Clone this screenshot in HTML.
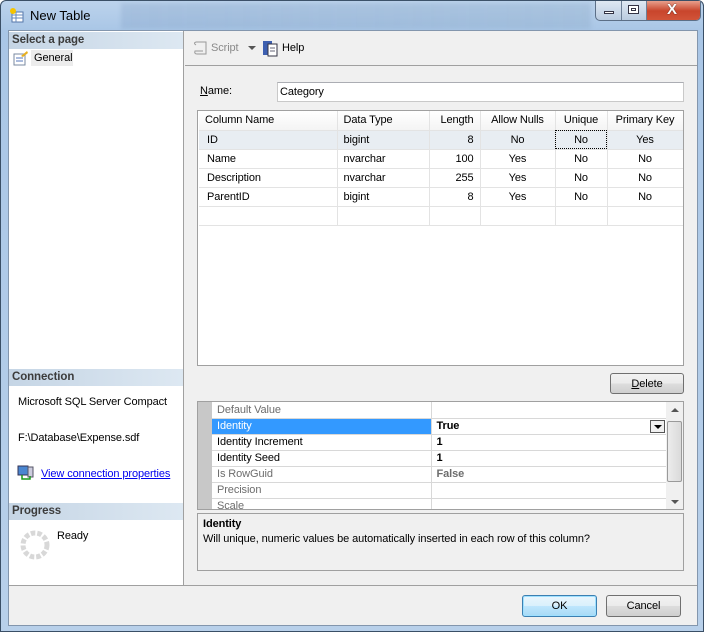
<!DOCTYPE html>
<html><head><meta charset="utf-8"><style>
*{box-sizing:border-box;margin:0;padding:0}
body{width:704px;height:632px;overflow:hidden;font-family:"Liberation Sans",sans-serif;font-size:11px;letter-spacing:-0.1px;color:#000;background:#fff}
.abs{position:absolute}
#win{position:absolute;left:0;top:0;width:704px;height:632px;background:linear-gradient(180deg,#bcd3ec 0,#a9c6e6 30px,#b8d0ea 100%);border:1px solid #3a4f66;border-radius:6px 6px 0 0}
#client{position:absolute;left:7px;top:29px;width:690px;height:596px;background:#f0f0f0;border:1px solid #8396ad}
.hdr{position:absolute;left:0;width:174px;height:17px;background:linear-gradient(90deg,#c5d5e5,#dde8f2);font-weight:bold;color:#3c3c3c;font-size:11.5px;padding:2px 3px}
.t{position:absolute;white-space:nowrap}
table{border-collapse:collapse;table-layout:fixed}
.grid td{height:19px;border-right:1px solid #e3e3e3;border-bottom:1px solid #e3e3e3;padding:0 6px;white-space:nowrap;overflow:hidden}
.btn{position:absolute;border:1px solid #707070;border-radius:3px;background:linear-gradient(#f2f2f2 0,#ebebeb 50%,#dddddd 51%,#cfcfcf 100%);text-align:center;line-height:20px}
.pg td{height:16px;border-bottom:1px solid #d8d8d8;padding:0 5px;white-space:nowrap}
</style></head><body>
<div id="win">
 <div class="abs" style="left:120px;top:2px;width:470px;height:26px;background:linear-gradient(90deg,rgba(120,150,190,.25),rgba(140,170,200,.35));filter:blur(2px)"></div>
 <svg class="abs" style="left:8px;top:6px" width="16" height="16"><rect x="3" y="5" width="11" height="10" fill="#fff" stroke="#5577aa"/><line x1="3" y1="8" x2="14" y2="8" stroke="#6688bb"/><line x1="3" y1="11" x2="14" y2="11" stroke="#6688bb"/><line x1="7" y1="5" x2="7" y2="15" stroke="#6688bb"/><circle cx="4" cy="4" r="3" fill="#f5c400"/></svg>
 <div class="t" style="left:29px;top:7px;font-size:13px;letter-spacing:0">New Table</div>
 <div class="abs" style="left:594px;top:0;width:106px;height:20px;border:1px solid #5c6f87;border-top:none;border-radius:0 0 5px 5px;overflow:hidden;background:linear-gradient(#dfe8f2,#b9cbe0)">
  <div class="abs" style="left:25px;top:0;width:1px;height:20px;background:#6d7f96"></div>
  <div class="abs" style="left:50px;top:0;width:1px;height:20px;background:#6d7f96"></div>
  <div class="abs" style="left:51px;top:0;width:55px;height:20px;background:linear-gradient(#e8a08c,#c8452c 50%,#d2553a)"></div>
  <div class="abs" style="left:8px;top:10px;width:10px;height:3px;background:#fff;border:1px solid #334"></div>
  <div class="abs" style="left:32px;top:4px;width:11px;height:9px;border:1px solid #334;background:#fff"><div style="margin:2px;height:3px;border:1px solid #334"></div></div>
  <div class="t" style="left:71px;top:0;color:#fff;font-weight:bold;font-size:15px;text-shadow:0 0 1px #000">X</div>
 </div>
 <div id="client">
  <div class="abs" style="left:0;top:0;width:175px;height:554px;background:#fff;border-right:1px solid #a0a0a0">
   <div class="hdr" style="top:1px">Select a page</div>
   <div class="abs" style="left:22px;top:19px;width:42px;height:16px;background:#ececec"></div>
   <svg class="abs" style="left:4px;top:19px" width="16" height="16"><rect x="1" y="4" width="11" height="11" fill="#fff" stroke="#7a8aa0"/><line x1="3" y1="8" x2="10" y2="8" stroke="#5577bb"/><line x1="3" y1="11" x2="10" y2="11" stroke="#5577bb"/><path d="M8 6 L14 1 L15 3 L10 7 Z" fill="#e8b020"/></svg>
   <div class="t" style="left:25px;top:21px">General</div>
   <div class="hdr" style="top:338px">Connection</div>
   <div class="t" style="left:9px;top:365px">Microsoft SQL Server Compact</div>
   <div class="t" style="left:9px;top:401px">F:\Database\Expense.sdf</div>
   <svg class="abs" style="left:8px;top:434px" width="18" height="16"><rect x="1" y="1" width="10" height="9" fill="#4a86d0" stroke="#335"/><rect x="11" y="2" width="5" height="10" fill="#ccd" stroke="#556"/><path d="M5 10 V14 H13 V11" stroke="#1a9a1a" stroke-width="1.5" fill="none"/></svg>
   <div class="t" style="left:32px;top:437px;color:#0000ee;text-decoration:underline">View connection properties</div>
   <div class="hdr" style="top:472px">Progress</div>
   <svg class="abs" style="left:10px;top:498px" width="32" height="32"><circle cx="16" cy="16" r="12" fill="none" stroke="#d8d8d8" stroke-width="5" stroke-dasharray="4.5 2"/></svg>
   <div class="t" style="left:48px;top:499px">Ready</div>
  </div>
  <div class="abs" style="left:176px;top:0;width:512px;height:35px;border-bottom:1px solid #a0a0a0"></div>
  <svg class="abs" style="left:184px;top:9px" width="16" height="18"><path d="M3 2 H13 V14 H4 Q1 14 2 11 H10" fill="none" stroke="#999"/><path d="M3 2 Q0 3 3 5" fill="none" stroke="#999"/></svg>
  <div class="t" style="left:202px;top:11px;color:#8a8a8a">Script</div>
  <div class="abs" style="left:239px;top:15px;border:4px solid transparent;border-top:4px solid #555"></div>
  <svg class="abs" style="left:253px;top:9px" width="16" height="17"><rect x="1" y="1" width="9" height="14" fill="#3d5fb0"/><rect x="6" y="4" width="9" height="12" fill="#fff" stroke="#334"/><line x1="8" y1="8" x2="13" y2="8" stroke="#667"/><line x1="8" y1="11" x2="13" y2="11" stroke="#667"/></svg>
  <div class="t" style="left:273px;top:11px">Help</div>
  <div class="t" style="left:191px;top:54px"><u>N</u>ame:</div>
  <div class="abs" style="left:268px;top:51px;width:407px;height:20px;background:#fff;border:1px solid #c9c9c9;border-top-color:#abadb3"><span class="t" style="left:2px;top:3px">Category</span></div>
  <div class="abs" style="left:188px;top:79px;width:487px;height:256px;background:#fff;border:1px solid #a0a0a0;overflow:hidden">
   <table class="grid" style="position:absolute;left:1px;top:0;width:484px">
    <tr style="background:linear-gradient(#fff,#f4f4f4)"><td style="width:138px;height:18px">Column Name</td><td style="width:92px">Data Type</td><td style="width:51px;text-align:right">Length</td><td style="width:75px;text-align:center">Allow Nulls</td><td style="width:52px;text-align:center">Unique</td><td style="width:76px;text-align:center">Primary Key</td></tr>
    <tr style="background:#e8edf2"><td style="padding-left:8px">ID</td><td>bigint</td><td style="text-align:right">8</td><td style="text-align:center">No</td><td style="text-align:center;outline:1px dotted #000;outline-offset:-1px">No</td><td style="text-align:center">Yes</td></tr>
    <tr><td style="padding-left:8px">Name</td><td>nvarchar</td><td style="text-align:right">100</td><td style="text-align:center">Yes</td><td style="text-align:center">No</td><td style="text-align:center">No</td></tr>
    <tr><td style="padding-left:8px">Description</td><td>nvarchar</td><td style="text-align:right">255</td><td style="text-align:center">Yes</td><td style="text-align:center">No</td><td style="text-align:center">No</td></tr>
    <tr><td style="padding-left:8px">ParentID</td><td>bigint</td><td style="text-align:right">8</td><td style="text-align:center">Yes</td><td style="text-align:center">No</td><td style="text-align:center">No</td></tr>
    <tr><td></td><td></td><td></td><td></td><td></td><td></td></tr>
   </table>
  </div>
  <div class="btn" style="left:601px;top:342px;width:74px;height:21px"><u>D</u>elete</div>
  <div class="abs" style="left:188px;top:370px;width:487px;height:109px;background:#fff;border:1px solid #a0a0a0;overflow:hidden">
   <div class="abs" style="left:0;top:0;width:14px;height:109px;background:#c8c8c8"></div>
   <table class="pg" style="position:absolute;left:14px;top:0;width:455px">
    <tr><td style="width:219px;color:#6d6d6d;border-right:1px solid #d8d8d8">Default Value</td><td style="width:236px"></td></tr>
    <tr><td style="background:#3399ff;color:#fff;border-right:1px solid #d8d8d8">Identity</td><td style="font-weight:bold;position:relative">True<span style="position:absolute;right:2px;top:1px;width:15px;height:13px;border:1px solid #555;background:#f0f0f0"><span style="position:absolute;left:3px;top:4px;border:4px solid transparent;border-top:4px solid #000;border-bottom:0"></span></span></td></tr>
    <tr><td style="border-right:1px solid #d8d8d8">Identity Increment</td><td style="font-weight:bold">1</td></tr>
    <tr><td style="border-right:1px solid #d8d8d8">Identity Seed</td><td style="font-weight:bold">1</td></tr>
    <tr><td style="color:#6d6d6d;border-right:1px solid #d8d8d8">Is RowGuid</td><td style="font-weight:bold;color:#6d6d6d">False</td></tr>
    <tr><td style="color:#6d6d6d;border-right:1px solid #d8d8d8">Precision</td><td></td></tr>
    <tr><td style="color:#6d6d6d;border-right:1px solid #d8d8d8">Scale</td><td></td></tr>
   </table>
   <div class="abs" style="left:468px;top:0;width:18px;height:108px;background:#f0f0f0">
    <div class="abs" style="left:5px;top:6px;border:4px solid transparent;border-bottom:4px solid #555;border-top:0"></div>
    <div class="abs" style="left:1px;top:19px;width:15px;height:61px;border:1px solid #9a9a9a;border-radius:2px;background:linear-gradient(90deg,#ececec,#dadada)"></div>
    <div class="abs" style="left:5px;top:98px;border:4px solid transparent;border-top:4px solid #555;border-bottom:0"></div>
   </div>
  </div>
  <div class="abs" style="left:188px;top:482px;width:487px;height:58px;border:1px solid #a0a0a0">
   <div class="t" style="left:5px;top:4px;font-weight:bold">Identity</div>
   <div class="t" style="left:5px;top:19px">Will unique, numeric values be automatically inserted in each row of this column?</div>
  </div>
  <div class="abs" style="left:0;top:554px;width:688px;height:1px;background:#a0a0a0"></div>
  <div class="btn" style="left:513px;top:564px;width:75px;height:22px;border-color:#3c7fb1;background:linear-gradient(#eaf6fd 0,#d9f0fc 50%,#bee6fd 51%,#a7d9f5 100%);box-shadow:inset 0 0 0 1px #9ee0ff">OK</div>
  <div class="btn" style="left:597px;top:564px;width:75px;height:22px">Cancel</div>
 </div>
</div>
</body></html>
